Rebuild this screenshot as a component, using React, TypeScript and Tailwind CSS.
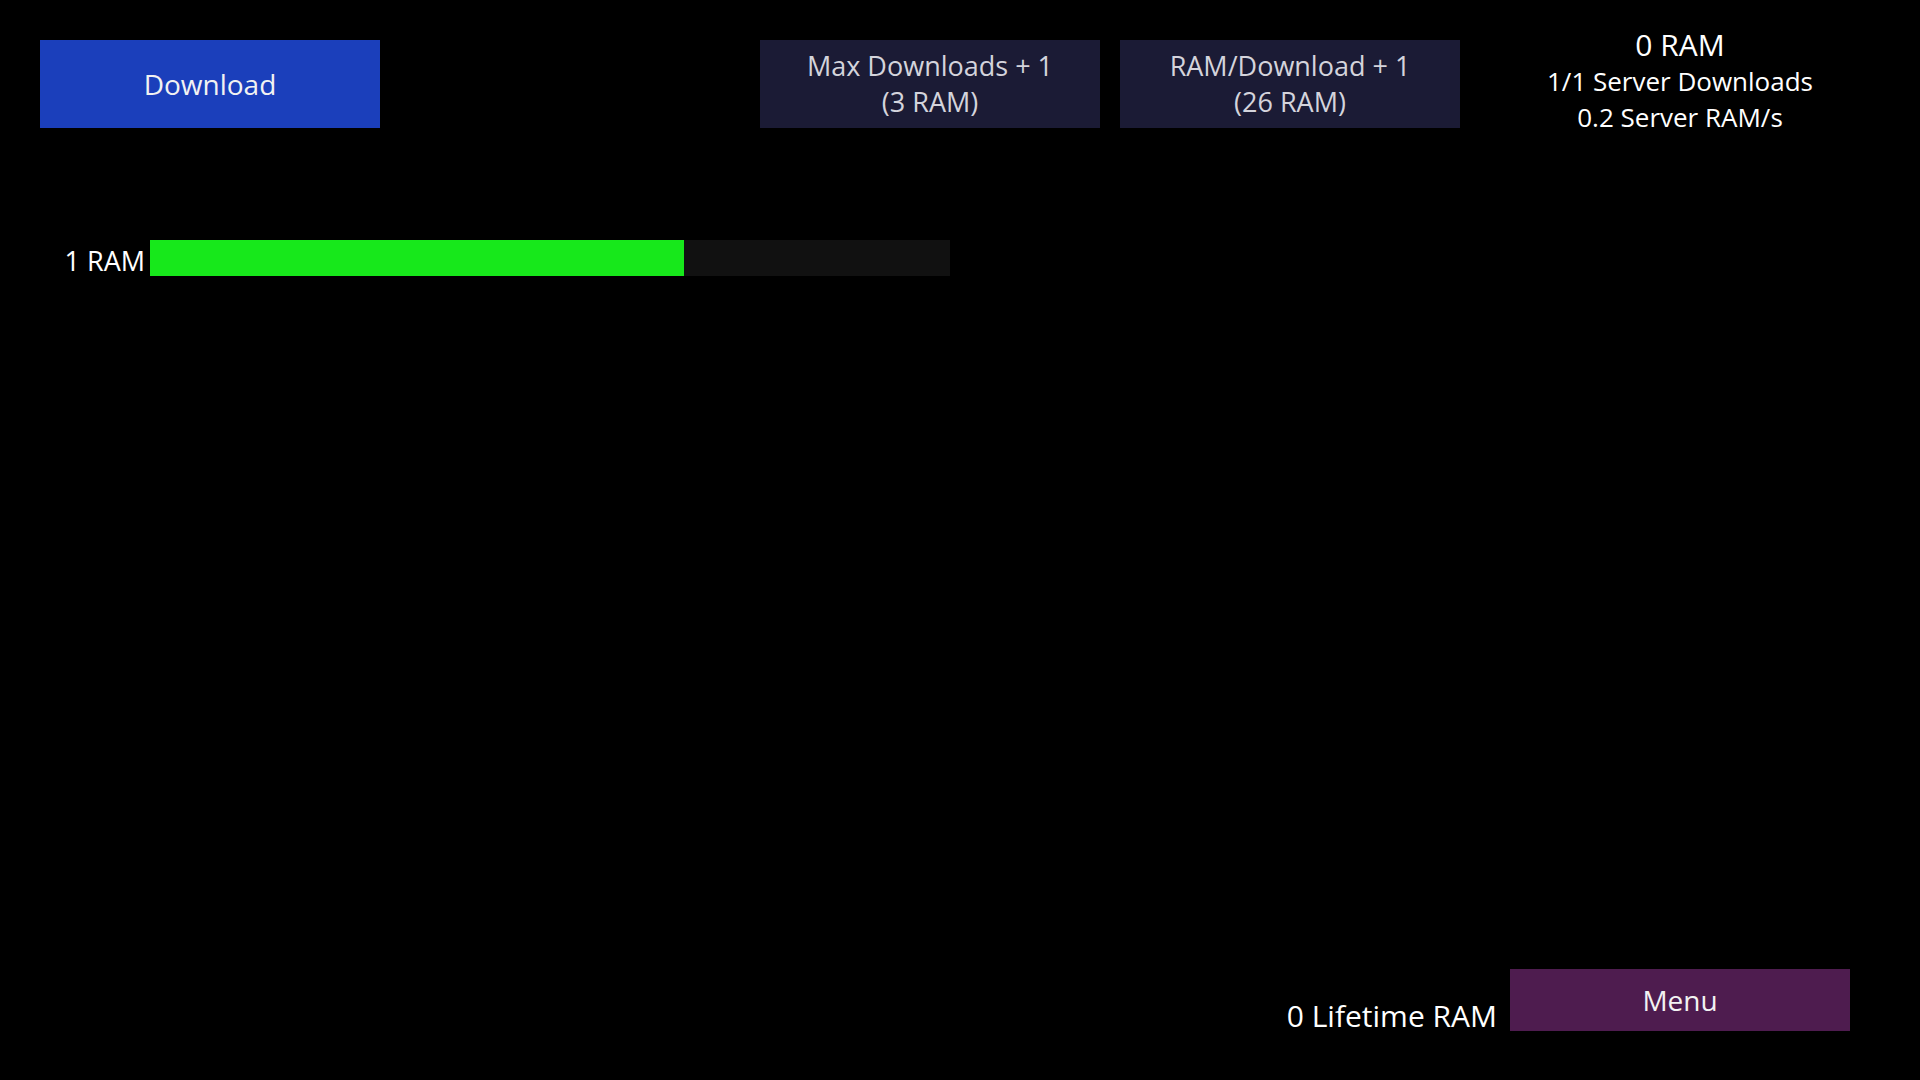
import React from "react";

const font = { fontFamily: '"Open Sans", "Noto Sans", sans-serif' };

export default function App() {
  const progress = 0.6675;

  return (
    <div
      className="w-[1920px] h-[1080px] bg-black text-white flex flex-col overflow-hidden"
      style={font}
    >
      {/* top row */}
      <div className="flex items-start pt-[27px] pl-[40px]">
        <button className="mt-[13px] w-[340px] h-[88px] bg-[#1b3fbb] text-[28px] font-medium text-[#f2f2f2]">
          Download
        </button>
        <button className="mt-[13px] ml-[380px] w-[340px] h-[88px] bg-[#1b1b35] text-[27px] leading-[36px] font-medium text-[#d4d4dc]">
          Max Downloads + 1
          <br />
          (3 RAM)
        </button>
        <button className="mt-[13px] ml-[20px] w-[340px] h-[88px] bg-[#1b1b35] text-[27px] leading-[36px] font-medium text-[#d4d4dc]">
          RAM/Download + 1
          <br />
          (26 RAM)
        </button>
        <div className="ml-[20px] w-[400px] flex flex-col items-center text-[26px] leading-[36px] font-medium">
          <span className="text-[30px]">0 RAM</span>
          <span>1/1 Server Downloads</span>
          <span>0.2 Server RAM/s</span>
        </div>
      </div>

      {/* progress bar */}
      <div className="flex items-center mt-[100px] pl-[40px]">
        <span className="w-[110px] pr-[5px] mt-[6px] text-right text-[27px] font-medium whitespace-nowrap">1 RAM</span>
        <div className="w-[800px] h-[36px] bg-[#111111]">
          <div className="h-full bg-[#17e81b]" style={{ width: `${progress * 100}%` }} />
        </div>
      </div>

      {/* bottom row */}
      <div className="mt-auto flex items-end justify-end pr-[70px] pb-[49px]">
        <span className="text-[30px] font-medium leading-[36px] mr-[13px] -mb-[3px]">0 Lifetime RAM</span>
        <button className="w-[340px] h-[62px] bg-[#4e1c4f] text-[28px] font-medium text-[#f2f2f2]">
          Menu
        </button>
      </div>
    </div>
  );
}
